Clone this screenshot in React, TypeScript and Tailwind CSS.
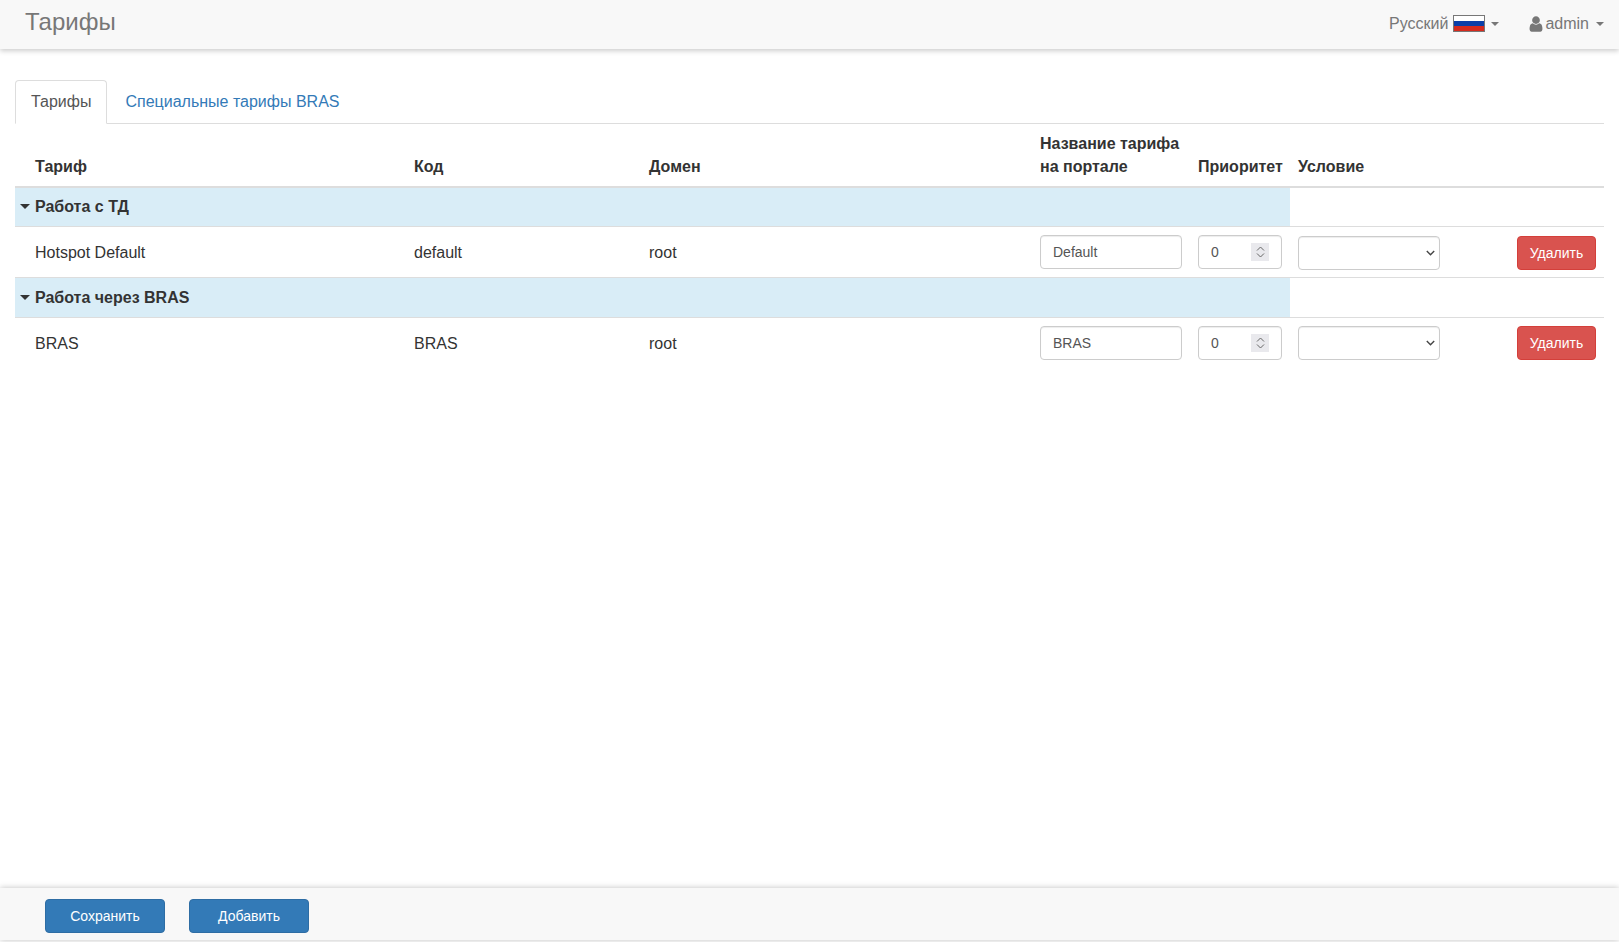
import React from "react";

const Caret = ({ className = "" }: { className?: string }) => (
  <span
    className={`inline-block w-0 h-0 border-x-[4px] border-x-transparent border-t-[4px] border-t-current ${className}`}
  />
);

const UserIcon = () => (
  <svg viewBox="0 0 1792 1792" className="w-[18px] h-[18px] fill-[#777]">
    <path d="M1536 1399q0 109-62.5 187t-150.5 78h-854q-88 0-150.5-78t-62.5-187q0-85 8.5-160.5t31.5-152 58.5-131 94-89 134.5-34.5q131 128 313 128t313-128q76 0 134.5 34.5t94 89 58.5 131 31.5 152 8.5 160.5zm-256-887q0 159-112.5 271.5t-271.5 112.5-271.5-112.5-112.5-271.5 112.5-271.5 271.5-112.5 271.5 112.5 112.5 271.5z" />
  </svg>
);

const Flag = () => (
  <span className="flex flex-col w-[32px] h-[17px] border border-[#777] ml-[5px] mr-[6px]">
    <span className="flex-1 bg-white" />
    <span className="flex-1 bg-[#0b3fa8]" />
    <span className="flex-1 bg-[#d52b1e]" />
  </span>
);

const Spinner = () => (
  <span className="absolute right-[13px] top-[8px] w-[18px] h-[18px] bg-[#e9e9ed] flex flex-col items-center justify-center gap-[2px]">
    <svg viewBox="0 0 9 5" className="w-[9px] h-[5px] fill-none stroke-[#666] stroke-1">
      <path d="M1 4.5l3.5-3.5 3.5 3.5" />
    </svg>
    <svg viewBox="0 0 9 5" className="w-[9px] h-[5px] fill-none stroke-[#666] stroke-1">
      <path d="M1 .5l3.5 3.5 3.5-3.5" />
    </svg>
  </span>
);

const inputCls =
  "block h-[34px] w-full px-3 text-[14px] text-[#555] bg-white border border-[#ccc] rounded-[4px] shadow-[inset_0_1px_1px_rgba(0,0,0,0.075)] outline-none";

const TariffRow = ({
  name,
  code,
  domain,
  title,
  rowClass,
  controlTop,
}: {
  name: string;
  code: string;
  domain: string;
  title: string;
  rowClass: string;
  controlTop: string;
}) => (
  <tr className={`border-b border-[#ddd] last:border-b-0 ${rowClass}`}>
    <td className="pl-5 pr-2 pt-[2px] align-middle">{name}</td>
    <td className="px-2 pt-[2px] align-middle">{code}</td>
    <td className="px-2 pt-[2px] align-middle">{domain}</td>
    <td className="px-2 pt-[8px] align-top">
      <input className={inputCls} defaultValue={title} />
    </td>
    <td className="px-2 pt-[8px] align-top">
      <div className="relative">
        <input className={inputCls} defaultValue="0" />
        <Spinner />
      </div>
    </td>
    <td className={`px-2 align-top ${controlTop}`}>
      <div className="relative w-[142px]">
        <select className="block appearance-none w-full h-[34px] px-3 text-[14px] text-[#555] bg-white border border-[#ccc] rounded-[4px] shadow-[inset_0_1px_1px_rgba(0,0,0,0.075)]" />
        <svg
          viewBox="0 0 9 6"
          className="absolute right-[5px] top-[14px] w-[9px] h-[6px] fill-none stroke-[#444] stroke-[1.4]"
        >
          <path d="M.8 1l3.7 3.7L8.2 1" />
        </svg>
      </div>
    </td>
    <td className={`px-2 align-top ${controlTop}`}>
      <button className="block ml-auto h-[34px] w-[79px] pt-[1px] text-[14px] text-white bg-[#d9534f] border border-[#d43f3a] rounded-[4px]">
        Удалить
      </button>
    </td>
  </tr>
);

const GroupRow = ({ label, rowClass }: { label: string; rowClass: string }) => (
  <tr className={`border-b border-[#ddd] ${rowClass}`}>
    <td colSpan={5} className="bg-[#d9edf7] px-[5px] align-middle font-bold">
      <span className="flex items-center gap-[5px]">
        <span className="inline-block w-0 h-0 border-x-[5px] border-x-transparent border-t-[5px] border-t-[#333]" />
        {label}
      </span>
    </td>
    <td colSpan={2} />
  </tr>
);

export default function App() {
  return (
    <div className="h-[942px] flex flex-col bg-white text-[16px] leading-[23px] text-[#333] font-['Liberation_Sans',Arial,sans-serif] overflow-hidden">
      <header className="h-[49px] shrink-0 bg-[#f8f8f8] flex items-center justify-between pl-[25px] pr-[15px] pb-[4px] shadow-[0_2px_5px_rgba(0,0,0,0.2)]">
        <h1 className="text-[24px] text-[#777] mb-[2px]">Тарифы</h1>
        <div className="flex items-center text-[#777] mt-[2px]">
          <span>Русский</span>
          <Flag />
          <Caret />
          <span className="ml-[28px]">
            <UserIcon />
          </span>
          <span>admin</span>
          <Caret className="ml-[7px]" />
        </div>
      </header>

      <main className="flex-1 pt-[31px] px-[15px]">
        <nav className="flex border-b border-[#ddd] h-[44px]">
          <a className="h-[44px] px-[15px] pt-[9px] text-[#555] bg-white border border-[#ddd] border-b-white rounded-t-[4px]">
            Тарифы
          </a>
          <a className="h-[43px] ml-[3px] px-[15px] pt-[10px] text-[#337ab7]">
            Специальные тарифы BRAS
          </a>
        </nav>

        <table className="w-full table-fixed border-collapse">
          <colgroup>
            <col className="w-[391px]" />
            <col className="w-[235px]" />
            <col className="w-[391px]" />
            <col className="w-[158px]" />
            <col className="w-[100px]" />
            <col className="w-[157px]" />
            <col className="w-[157px]" />
          </colgroup>
          <thead>
            <tr className="h-[63px] border-b-2 border-[#ddd] font-bold text-left">
              <th className="pl-5 pr-2 pb-[8px] align-bottom">Тариф</th>
              <th className="px-2 pb-[8px] align-bottom">Код</th>
              <th className="px-2 pb-[8px] align-bottom">Домен</th>
              <th className="px-2 pb-[8px] align-bottom">
                Название тарифа
                <br />
                на портале
              </th>
              <th className="px-2 pb-[8px] align-bottom">Приоритет</th>
              <th className="px-2 pb-[8px] align-bottom">Условие</th>
              <th className="px-2 pb-[8px] align-bottom" />
            </tr>
          </thead>
          <tbody>
            <GroupRow label="Работа с ТД" rowClass="h-[39px]" />
            <TariffRow
              name="Hotspot Default"
              code="default"
              domain="root"
              title="Default"
              rowClass="h-[51px]"
              controlTop="pt-[9px]"
            />
            <GroupRow label="Работа через BRAS" rowClass="h-[40px]" />
            <TariffRow
              name="BRAS"
              code="BRAS"
              domain="root"
              title="BRAS"
              rowClass="h-[50px]"
              controlTop="pt-[8px]"
            />
          </tbody>
        </table>
      </main>

      <footer className="h-[52px] mb-[2px] shrink-0 bg-[#f8f8f8] flex items-center gap-[24px] pl-[45px] pt-[3px] shadow-[0_0_6px_rgba(0,0,0,0.25)]">
        <button className="h-[34px] w-[120px] pt-[1px] text-[14px] text-white bg-[#337ab7] border border-[#2e6da4] rounded-[4px]">
          Сохранить
        </button>
        <button className="h-[34px] w-[120px] pt-[1px] text-[14px] text-white bg-[#337ab7] border border-[#2e6da4] rounded-[4px]">
          Добавить
        </button>
      </footer>
    </div>
  );
}
